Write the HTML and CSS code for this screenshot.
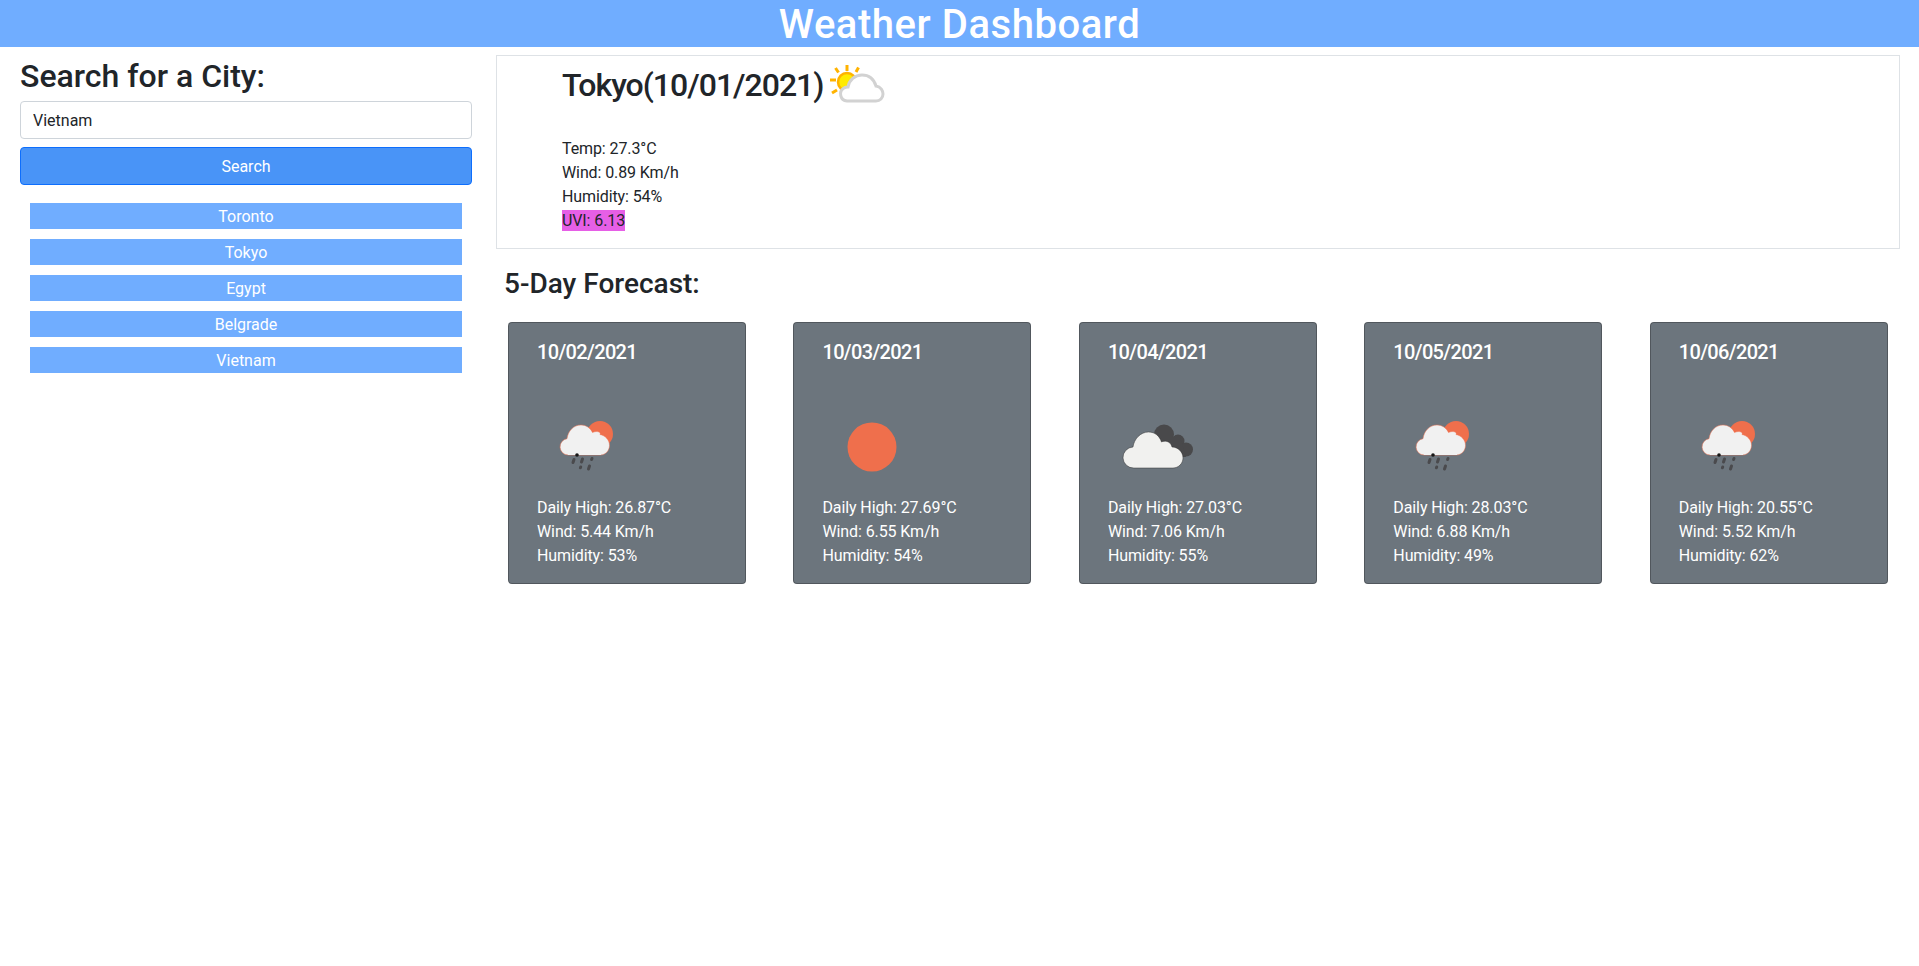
FILE: index.html
```html
<!DOCTYPE html>
<html lang="en">
<head>
  <meta charset="UTF-8">
  <title>Weather Dashboard</title>
  <link rel="stylesheet" href="styles.css">
</head>
<body>

  <svg class="icon-defs" aria-hidden="true">
    <symbol id="rain-sun" viewBox="0 0 100 100">
      <circle cx="63" cy="37" r="13" fill="#ef6f4c"/>
      <path d="M31 58a8.200 8.200 0 0 1-1-16.300C31 34 36.500 28 44 28c5 0 9.500 3 11.500 7.500 4-2 9-.5 7.500 2 5 1 9.500 5 9.500 11 0 5-4 9.500-9 9.500z" fill="#f1f1f1" stroke="#ef6f4c" stroke-width=".5"/>
      <path d="M31 58h33v-8H31z" fill="#f1f1f1"/>
      <circle cx="40" cy="58" r="1.800" fill="#161616"/>
      <g stroke="#4a4a4d" stroke-width="3" stroke-linecap="round">
        <path d="M37 62.500l-1 3"/>
        <path d="M45.500 62l-1 3"/>
        <path d="M55 61.500l-.4 1"/>
        <path d="M43.700 70l-.3 .8"/>
        <path d="M52.500 69l-1 3"/>
      </g>
    </symbol>
    <symbol id="sun" viewBox="0 0 100 100">
      <circle cx="50" cy="50" r="24.500" fill="#ef6f4c"/>
    </symbol>
    <symbol id="clouds" viewBox="0 0 100 100">
      <g fill="#49494b">
        <circle cx="56" cy="37.500" r="10"/>
        <circle cx="70" cy="44" r="6.500"/>
        <circle cx="78" cy="52.500" r="7"/>
        <path d="M48 40h24l6 20H56z"/>
      </g>
      <path d="M26 71a10.500 10.500 0 0 1-1-21c1-8 7.500-15 15.500-15 6.500 0 11 4 13 10 2.500-1.500 9-1.500 10.500 5 6 0 11 5 11 11 0 5.500-4.500 10-10 10z" fill="#f1f1ef" stroke="#333" stroke-width=".5"/>
    </symbol>
    <symbol id="sun-cloud" viewBox="0 0 70 50">
      <g stroke="#ffb300" stroke-width="3" stroke-linecap="butt">
        <path d="M25 5v6"/>
        <path d="M13.500 8l3 4.500"/>
        <path d="M36.500 7.500l-2.500 4.500"/>
        <path d="M8 20h6"/>
        <path d="M10 33l5-3"/>
      </g>
      <circle cx="25" cy="22" r="9" fill="#ffeb00" stroke="#ffb300" stroke-width="2.500"/>
      <path d="M25 41a7 7 0 0 1-3-13c1.500-1 3-1 4-1 1-7 7-12 14-12s12 4.500 14 11c5 .5 7 5 7 8 0 4-3 7-7 7z" fill="#fff" stroke="#d2d2d2" stroke-width="3"/>
    </symbol>
  </svg>

  <header class="site-header">
    <h1>Weather Dashboard</h1>
  </header>

  <div class="page">
    <aside class="sidebar">
      <h2>Search for a City:</h2>
      <form class="search-form">
        <input type="text" class="city-input" value="Vietnam">
        <button type="button" class="search-btn">Search</button>
      </form>
      <div class="history">
        <button type="button">Toronto</button>
        <button type="button">Tokyo</button>
        <button type="button">Egypt</button>
        <button type="button">Belgrade</button>
        <button type="button">Vietnam</button>
      </div>
    </aside>

    <main class="content">
      <section class="current">
        <div class="current-title">
          <h2>Tokyo(10/01/2021)</h2>
          <svg class="current-icon"><use href="#sun-cloud"/></svg>
        </div>
        <p>Temp: 27.3°C</p>
        <p>Wind: 0.89 Km/h</p>
        <p>Humidity: 54%</p>
        <p><span class="uvi">UVI: 6.13</span></p>
      </section>

      <h3 class="forecast-heading">5-Day Forecast:</h3>

      <section class="forecast">
        <article class="day">
          <h4>10/02/2021</h4>
          <svg class="day-icon"><use href="#rain-sun"/></svg>
          <p>Daily High: 26.87°C</p>
          <p>Wind: 5.44 Km/h</p>
          <p>Humidity: 53%</p>
        </article>
        <article class="day">
          <h4>10/03/2021</h4>
          <svg class="day-icon"><use href="#sun"/></svg>
          <p>Daily High: 27.69°C</p>
          <p>Wind: 6.55 Km/h</p>
          <p>Humidity: 54%</p>
        </article>
        <article class="day">
          <h4>10/04/2021</h4>
          <svg class="day-icon"><use href="#clouds"/></svg>
          <p>Daily High: 27.03°C</p>
          <p>Wind: 7.06 Km/h</p>
          <p>Humidity: 55%</p>
        </article>
        <article class="day">
          <h4>10/05/2021</h4>
          <svg class="day-icon"><use href="#rain-sun"/></svg>
          <p>Daily High: 28.03°C</p>
          <p>Wind: 6.88 Km/h</p>
          <p>Humidity: 49%</p>
        </article>
        <article class="day">
          <h4>10/06/2021</h4>
          <svg class="day-icon"><use href="#rain-sun"/></svg>
          <p>Daily High: 20.55°C</p>
          <p>Wind: 5.52 Km/h</p>
          <p>Humidity: 62%</p>
        </article>
      </section>
    </main>
  </div>

</body>
</html>
```

FILE: styles.css
```css
* { box-sizing: border-box; }
body { margin: 0; font-family: Roboto, "Noto Sans", sans-serif; font-size: 16px; line-height: 24px; color: #212529; background: #fff; }
h1, h2, h3, h4, p { margin: 0; }
p { letter-spacing: -.1px; }
.icon-defs { display: none; }

.site-header { height: 47px; background: #70adff; color: #fff; text-align: center; }
.site-header h1 { font-size: 40px; font-weight: 500; line-height: 50px; letter-spacing: .55px; }

.page { display: flex; align-items: flex-start; }

.sidebar { width: 492px; padding: 10px 20px 0; flex-shrink: 0; }
.sidebar h2 { font-size: 32px; font-weight: 500; line-height: 38px; margin-bottom: 6px; }
.search-form { display: flex; flex-direction: column; gap: 8px; }
.city-input { height: 38px; padding: 6px 12px; border: 1px solid #ced4da; border-radius: 4px; font: inherit; color: #212529; }
.search-btn { height: 38px; padding: 1px 0 0; border: 1px solid #0d6efd; border-radius: 4px; background: #4994f7; color: #fff; font: inherit; }
.history { display: flex; flex-direction: column; gap: 10px; margin: 18px 10px 0; }
.history button { height: 26px; padding: 2px 0 0; border: none; background: #70adff; color: #fff; font: inherit; line-height: 24px; }

.content { flex: 1; padding: 8px 19px 0 4px; }
.current { height: 194px; padding: 4px 0 0 65px; border: 1px solid #dee2e6; }
.current-title { display: flex; height: 74px; margin-bottom: 3px; }
.current-title h2 { font-size: 32px; font-weight: 500; line-height: 50px; letter-spacing: -1px; }
.current-icon { width: 70px; height: 50px; margin-left: -2px; }
.uvi { display: inline-block; background: #e65fe6; line-height: 21px; }

.forecast-heading { font-size: 28px; font-weight: 500; line-height: 34px; margin: 18px 0 21px 8px; }

.forecast { display: flex; justify-content: space-between; padding: 0 12.25px 0 12px; }
.day { width: 238px; height: 262px; padding: 17px 28px 16px; background: #6c757d; border: 1px solid rgba(0,0,0,.25); border-radius: 4px; color: #fff; }
.day h4 { font-size: 20px; font-weight: 500; line-height: 24px; letter-spacing: -.65px; }
.day-icon { display: block; width: 100px; height: 100px; margin: 33px 0 -1px; }
```
